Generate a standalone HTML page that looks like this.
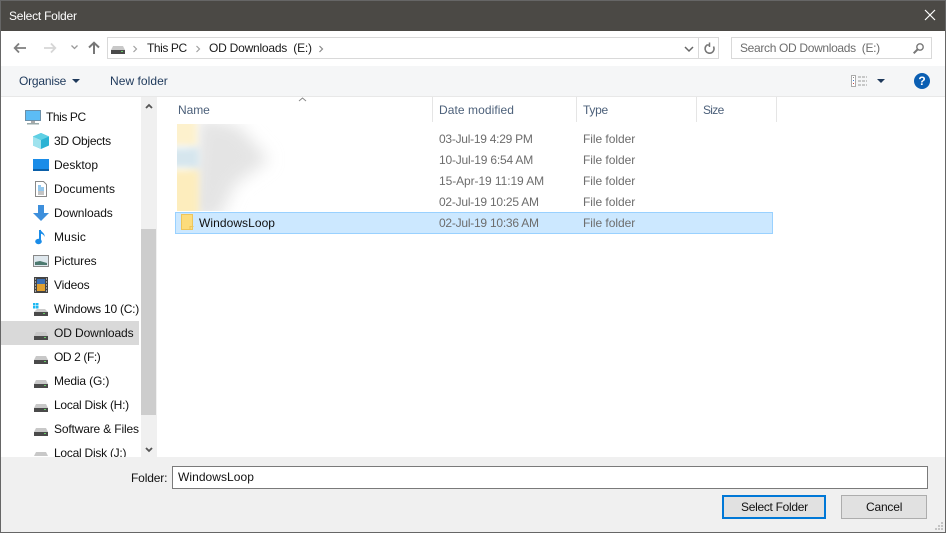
<!DOCTYPE html>
<html><head><meta charset="utf-8"><style>
html,body{margin:0;padding:0;width:946px;height:533px;overflow:hidden;background:#fff}
#w{position:relative;width:946px;height:533px;overflow:hidden;font:12px "Liberation Sans",sans-serif;color:#1a1a1a}
#w div,#w span.t{position:absolute}
.t{white-space:nowrap;line-height:16px;letter-spacing:0}
svg{position:absolute;overflow:visible}
.n{left:54px;color:#111}
.d{left:439px;color:#6d6d6d;letter-spacing:-.22px}
.f{left:583px;color:#6d6d6d;letter-spacing:-.05px}
.h{color:#4c607a;top:102px}
</style></head><body><div id="w">
<div style="left:0;top:0;width:946px;height:31px;background:#4b4945"></div>
<div style="left:0;top:0;width:946px;height:1px;background:#666"></div>
<span class="t" style="left:9px;top:8px;color:#fff;letter-spacing:-.23px">Select Folder</span>
<svg style="left:925px;top:10px" width="10" height="10"><path d="M0 0L10 10M10 0L0 10" stroke="#fff" stroke-width="1.200"/></svg>

<!-- nav -->
<svg style="left:14px;top:43px" width="12" height="10"><path d="M0.500 5H12M5 .500L.700 5 5 9.500" fill="none" stroke="#7f7f7f" stroke-width="1.800"/></svg>
<svg style="left:44px;top:43px" width="12" height="10"><path d="M0 5H11.500M7 .500L11.300 5 7 9.500" fill="none" stroke="#d6d6d6" stroke-width="1.800"/></svg>
<svg style="left:71px;top:45px" width="7" height="5"><path d="M.500 .500l3 3 3-3" fill="none" stroke="#9a9a9a" stroke-width="1.300"/></svg>
<svg style="left:88px;top:42px" width="12" height="12"><path d="M6 12V1M1 5.500L6 .700l5 4.800" fill="none" stroke="#777" stroke-width="2"/></svg>
<div style="left:107px;top:37px;width:610px;height:20px;border:1px solid #d9d9d9"></div>
<div style="left:698px;top:38px;width:1px;height:20px;background:#d9d9d9"></div>
<svg style="left:111px;top:46px" width="14" height="8"><path d="M2 0h10l2 4H0z" fill="#c8c8c8"/><rect y="4" width="14" height="4" fill="#4a4a4a"/><rect x="10" y="5" width="2" height="1" fill="#6c6"/></svg>
<svg style="left:133px;top:45px" width="5" height="8"><path d="M.500 1l3 3-3 3" fill="none" stroke="#a0a0a0" stroke-width="1.200"/></svg>
<span class="t" style="left:147px;top:40px;letter-spacing:-.42px">This PC</span>
<svg style="left:196px;top:45px" width="5" height="8"><path d="M.500 1l3 3-3 3" fill="none" stroke="#a0a0a0" stroke-width="1.200"/></svg>
<span class="t" style="left:209px;top:40px;letter-spacing:-.22px">OD Downloads&nbsp; (E:)</span>
<svg style="left:319px;top:45px" width="5" height="8"><path d="M.500 1l3 3-3 3" fill="none" stroke="#888" stroke-width="1.200"/></svg>
<svg style="left:684px;top:46px" width="10" height="7"><path d="M1 1l4 4 4-4" fill="none" stroke="#666" stroke-width="1.500"/></svg>
<svg style="left:704px;top:42px" width="11" height="13"><path d="M9.500 4.500A4.500 4.500 0 1 1 3 3H6" fill="none" stroke="#777" stroke-width="1.600"/><path d="M5.500 .500V5" stroke="#777" stroke-width="1.500" fill="none"/></svg>
<div style="left:731px;top:37px;width:199px;height:20px;border:1px solid #d9d9d9"></div>
<span class="t" style="left:740px;top:40px;color:#6d6d6d;letter-spacing:-.33px">Search OD Downloads&nbsp; (E:)</span>
<svg style="left:913px;top:43px" width="11" height="11"><circle cx="7" cy="4" r="3.200" fill="none" stroke="#777" stroke-width="1.400"/><path d="M4.500 6.500L.700 10.300" stroke="#777" stroke-width="2"/></svg>

<!-- toolbar -->
<div style="left:0;top:66px;width:946px;height:31px;background:#f5f6f7"></div>
<div style="left:0;top:96px;width:946px;height:1px;background:#e8e8e8"></div>
<span class="t" style="left:19px;top:73px;color:#1e395b;letter-spacing:-.2px">Organise</span>
<svg style="left:72px;top:79px" width="8" height="4"><path d="M0 0h8L4 4z" fill="#1e395b"/></svg>
<span class="t" style="left:110px;top:73px;color:#1e395b;letter-spacing:.05px">New folder</span>
<svg style="left:851px;top:75px" width="16" height="12"><rect x=".5" y=".5" width="4" height="11" fill="#fff" stroke="#aaa"/><path d="M2 2h1v1H2z" fill="#888"/><path d="M2 5h1v1H2z" fill="#3a7bd5"/><path d="M2 8h1v1H2z" fill="#c44"/><path d="M7 2h9M7 6h9M7 10h9" stroke="#999" stroke-dasharray="3 1"/></svg>
<svg style="left:877px;top:79px" width="8" height="4"><path d="M0 0h8L4 4z" fill="#1e395b"/></svg>
<div style="left:914px;top:73px;width:16px;height:16px;border-radius:50%;background:#0b5fb3;color:#fff;font:bold 12px/16px 'Liberation Sans',sans-serif;text-align:center">?</div>

<!-- left pane -->
<div style="left:141px;top:97px;width:16px;height:361px;background:#f0f0f0"></div>
<div style="left:141px;top:229px;width:15px;height:186px;background:#cdcdcd"></div>
<svg style="left:145px;top:103px" width="8" height="6"><path d="M1 5l3-3 3 3" fill="none" stroke="#555" stroke-width="1.800"/></svg>
<svg style="left:145px;top:447px" width="8" height="6"><path d="M1 1l3 3 3-3" fill="none" stroke="#555" stroke-width="1.800"/></svg>
<div style="left:1px;top:321px;width:138px;height:24px;background:#d9d9d9"></div>

<svg style="left:25px;top:110px" width="17" height="15"><rect x=".5" y=".5" width="15" height="10" fill="#5cbcf5" stroke="#6b8fa8"/><rect x="6" y="11" width="4" height="2" fill="#aaa"/><rect x="2" y="13" width="12" height="1.500" fill="#9aa"/></svg>
<span class="t n" style="left:46px;top:109px;letter-spacing:-.42px">This PC</span>

<svg style="left:33px;top:133px" width="16" height="16"><path d="M8 0l8 3.500v9L8 16 0 12.500v-9z" fill="#2bb3d4"/><path d="M0 3.500L8 7v9L0 12.500z" fill="#9fe3ee"/><path d="M8 0l8 3.500L8 7 0 3.500z" fill="#5fd0e4"/></svg>
<span class="t n" style="top:133px;letter-spacing:-.25px">3D Objects</span>

<svg style="left:33px;top:159px" width="16" height="12"><rect width="16" height="12" fill="#1a8ce8"/><rect y="10" width="16" height="2" fill="#0b5fa8"/></svg>
<span class="t n" style="top:157px">Desktop</span>

<svg style="left:35px;top:181px" width="12" height="16"><path d="M.5.500h8l3 3v12H.5z" fill="#fff" stroke="#888"/><path d="M3 5h3M3 7h6M3 9h6" stroke="#2a8fd8"/><path d="M3 11h6M3 13h6" stroke="#888"/></svg>
<span class="t n" style="top:181px;letter-spacing:.04px">Documents</span>

<svg style="left:33px;top:205px" width="16" height="16"><path d="M5 0h6v8h5l-8 8-8-8h5z" fill="#3d8fdc"/></svg>
<span class="t n" style="top:205px;letter-spacing:-.07px">Downloads</span>

<svg style="left:35px;top:229px" width="12" height="16"><path d="M5 1v11" stroke="#1a8ce8" stroke-width="2"/><ellipse cx="3.500" cy="12.500" rx="3.300" ry="2.700" fill="#1a8ce8"/><path d="M5.500 0c0 3 5 4 4 8-.5-2-2-3-4-3.500z" fill="#1a8ce8"/></svg>
<span class="t n" style="top:229px;letter-spacing:.15px">Music</span>

<svg style="left:33px;top:255px" width="16" height="12"><rect x=".5" y=".5" width="15" height="11" fill="#dfe8ee" stroke="#888"/><path d="M2 7l5-1 7 2v2H2z" fill="#4d7a70"/></svg>
<span class="t n" style="top:253px;letter-spacing:-.1px">Pictures</span>

<svg style="left:34px;top:277px" width="14" height="16"><rect width="14" height="16" fill="#444"/><rect x="3" y="2" width="8" height="12" fill="#e0a030"/><rect x="3" y="2" width="8" height="5" fill="#3a6fb5"/><path d="M1 2h1M1 5h1M1 8h1M1 11h1M1 14h1M12 2h1M12 5h1M12 8h1M12 11h1M12 14h1" stroke="#fff"/></svg>
<span class="t n" style="top:277px;letter-spacing:-.18px">Videos</span>

<svg style="left:33px;top:303px" width="16" height="14"><path d="M0 0h2.500v2.500H0zM3 0h2.500v2.500H3zM0 3h2.500v2.500H0zM3 3h2.500v2.500H3z" fill="#1db8f2"/><path d="M4 6h8l3 3H1z" fill="#ccc"/><rect x="1" y="9" width="14" height="4" fill="#4a4a4a"/><rect x="10" y="10" width="2" height="1" fill="#6c6"/></svg>
<span class="t n" style="top:301px;letter-spacing:-.25px">Windows 10 (C:)</span>

<svg style="left:34px;top:332px" width="14" height="8"><path d="M2 0h10l2 4H0z" fill="#c8c8c8"/><rect y="4" width="14" height="4" fill="#4a4a4a"/><rect x="10" y="5" width="2" height="1" fill="#6c6"/></svg>
<span class="t n" style="top:325px;letter-spacing:-.1px">OD Downloads</span>
<svg style="left:34px;top:356px" width="14" height="8"><path d="M2 0h10l2 4H0z" fill="#c8c8c8"/><rect y="4" width="14" height="4" fill="#4a4a4a"/><rect x="10" y="5" width="2" height="1" fill="#6c6"/></svg>
<span class="t n" style="top:349px;letter-spacing:-.4px">OD 2 (F:)</span>
<svg style="left:34px;top:380px" width="14" height="8"><path d="M2 0h10l2 4H0z" fill="#c8c8c8"/><rect y="4" width="14" height="4" fill="#4a4a4a"/><rect x="10" y="5" width="2" height="1" fill="#6c6"/></svg>
<span class="t n" style="top:373px;letter-spacing:-.15px">Media (G:)</span>
<svg style="left:34px;top:404px" width="14" height="8"><path d="M2 0h10l2 4H0z" fill="#c8c8c8"/><rect y="4" width="14" height="4" fill="#4a4a4a"/><rect x="10" y="5" width="2" height="1" fill="#6c6"/></svg>
<span class="t n" style="top:397px;letter-spacing:-.25px">Local Disk (H:)</span>
<svg style="left:34px;top:428px" width="14" height="8"><path d="M2 0h10l2 4H0z" fill="#c8c8c8"/><rect y="4" width="14" height="4" fill="#4a4a4a"/><rect x="10" y="5" width="2" height="1" fill="#6c6"/></svg>
<span class="t n" style="top:421px;letter-spacing:-.16px">Software &amp; Files</span>
<svg style="left:34px;top:452px" width="14" height="5"><path d="M2 0h10l2 4H0z" fill="#c8c8c8"/></svg>
<span class="t n" style="top:445px;letter-spacing:-.25px">Local Disk (J:)</span>

<!-- headers -->
<svg style="left:298px;top:97px" width="9" height="5"><path d="M1 4l3.500-3L8 4" fill="none" stroke="#888"/></svg>
<div style="left:432px;top:97px;width:1px;height:25px;background:#e5e5e5"></div>
<div style="left:576px;top:97px;width:1px;height:25px;background:#e5e5e5"></div>
<div style="left:696px;top:97px;width:1px;height:25px;background:#e5e5e5"></div>
<div style="left:776px;top:97px;width:1px;height:25px;background:#e5e5e5"></div>
<span class="t h" style="left:178px;letter-spacing:-.05px">Name</span>
<span class="t h" style="left:439px;letter-spacing:.07px">Date modified</span>
<span class="t h" style="left:583px;letter-spacing:-.3px">Type</span>
<span class="t h" style="left:703px;letter-spacing:-.7px">Size</span>

<!-- blurred -->
<div style="left:177px;top:124px;width:125px;height:87px;overflow:hidden">
<svg style="left:0;top:0" width="125" height="87">
<defs><filter id="b1" x="-50%" y="-50%" width="200%" height="200%"><feGaussianBlur stdDeviation="8"/></filter><filter id="b2" x="-50%" y="-50%" width="200%" height="200%"><feGaussianBlur stdDeviation="3.500"/></filter></defs>
<polygon points="22,-8 62,2 92,36 58,60 42,95 14,95" fill="#e4e4e4" filter="url(#b1)"/>
<rect x="-10" y="-8" width="30" height="30" fill="#fdf1cd" filter="url(#b2)"/>
<rect x="-10" y="24" width="32" height="20" fill="#d6e6ee" filter="url(#b2)"/>
<rect x="-10" y="46" width="32" height="50" fill="#fdedbd" filter="url(#b2)"/>
</svg>
</div>

<!-- rows -->
<span class="t d" style="top:131px;letter-spacing:-.26px">03-Jul-19 4:29 PM</span><span class="t f" style="top:131px">File folder</span>
<span class="t d" style="top:152px;letter-spacing:-.2px">10-Jul-19 6:54 AM</span><span class="t f" style="top:152px">File folder</span>
<span class="t d" style="top:173px;letter-spacing:-.08px">15-Apr-19 11:19 AM</span><span class="t f" style="top:173px">File folder</span>
<span class="t d" style="top:194px;letter-spacing:-.24px">02-Jul-19 10:25 AM</span><span class="t f" style="top:194px">File folder</span>
<div style="left:175px;top:212px;width:596px;height:20px;background:#cce8ff;border:1px solid #99d1ff"></div>
<svg style="left:181px;top:214px" width="13" height="16"><path d="M.5.500h11v15H.5z" fill="#fcdc7c" stroke="#eec55a"/><path d="M9 15.500v-3h3.500" fill="none" stroke="#eec55a"/></svg>
<span class="t" style="left:199px;top:215px;color:#111;letter-spacing:.06px">WindowsLoop</span>
<span class="t d" style="top:215px;letter-spacing:-.24px">02-Jul-19 10:36 AM</span><span class="t f" style="top:215px">File folder</span>

<!-- bottom -->
<div style="left:0;top:457px;width:946px;height:76px;background:#f0f0f0"></div>
<span class="t" style="left:131px;top:470px;color:#111;letter-spacing:-.15px">Folder:</span>
<div style="left:172px;top:466px;width:754px;height:21px;background:#fff;border:1px solid #7a7a7a"></div>
<span class="t" style="left:178px;top:469px;color:#111;letter-spacing:.05px">WindowsLoop</span>
<div style="left:722px;top:495px;width:100px;height:20px;border:2px solid #0078d7;background:#e1e1e1"></div>
<span class="t" style="left:741px;top:499px;color:#111;letter-spacing:-.3px">Select Folder</span>
<div style="left:841px;top:495px;width:84px;height:22px;border:1px solid #adadad;background:#e1e1e1"></div>
<span class="t" style="left:866px;top:499px;color:#111;letter-spacing:-.2px">Cancel</span>
<svg style="left:934px;top:521px" width="10" height="10"><path d="M7 1h2v2H7zM4 4h2v2H4zM7 4h2v2H7zM1 7h2v2H1zM4 7h2v2H4zM7 7h2v2H7z" fill="#c4c4c4"/></svg>

<!-- frame -->
<div style="left:0;top:0;width:1px;height:533px;background:#666"></div>
<div style="left:945px;top:0;width:1px;height:533px;background:#666"></div>
<div style="left:0;top:532px;width:946px;height:1px;background:#666"></div>
</div></body></html>
